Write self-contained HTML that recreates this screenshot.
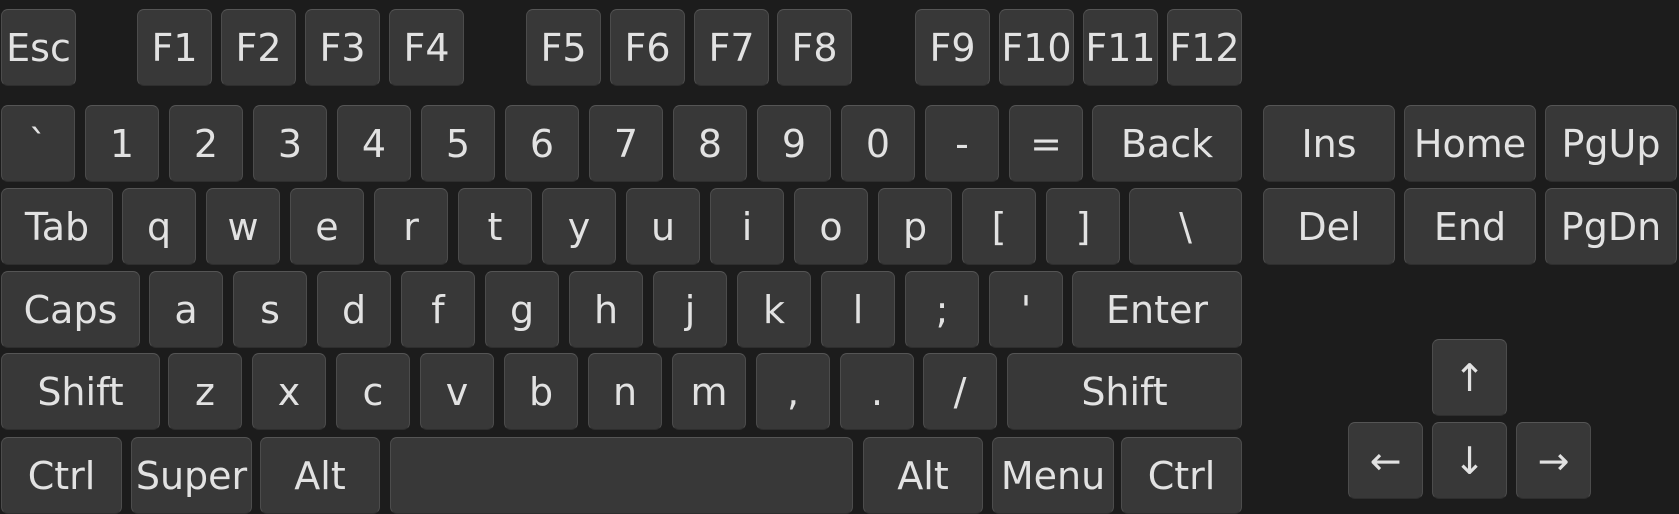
<!DOCTYPE html>
<html><head><meta charset="utf-8"><style>
html,body{margin:0;padding:0;background:#1c1c1c;width:1679px;height:512px;overflow:hidden}
.k{position:absolute;height:75px;background:#383838;border:1px solid #4c4c4c;border-top-color:#555;border-bottom-color:#2e2e2e;border-radius:7px;color:#e2e2e2;font-family:"DejaVu Sans","Liberation Sans",sans-serif;font-size:38px;display:flex;align-items:center;justify-content:center;white-space:nowrap;box-sizing:content-box}
</style></head><body>
<div class="k" style="left:1px;top:9px;width:73px">Esc</div>
<div class="k" style="left:137px;top:9px;width:73px">F1</div>
<div class="k" style="left:221px;top:9px;width:73px">F2</div>
<div class="k" style="left:305px;top:9px;width:73px">F3</div>
<div class="k" style="left:389px;top:9px;width:73px">F4</div>
<div class="k" style="left:526px;top:9px;width:73px">F5</div>
<div class="k" style="left:610px;top:9px;width:73px">F6</div>
<div class="k" style="left:694px;top:9px;width:73px">F7</div>
<div class="k" style="left:777px;top:9px;width:73px">F8</div>
<div class="k" style="left:915px;top:9px;width:73px">F9</div>
<div class="k" style="left:999px;top:9px;width:73px">F10</div>
<div class="k" style="left:1083px;top:9px;width:73px">F11</div>
<div class="k" style="left:1167px;top:9px;width:73px">F12</div>

<div class="k" style="left:1px;top:105px;width:72px">`</div>
<div class="k" style="left:85px;top:105px;width:72px">1</div>
<div class="k" style="left:169px;top:105px;width:72px">2</div>
<div class="k" style="left:253px;top:105px;width:72px">3</div>
<div class="k" style="left:337px;top:105px;width:72px">4</div>
<div class="k" style="left:421px;top:105px;width:72px">5</div>
<div class="k" style="left:505px;top:105px;width:72px">6</div>
<div class="k" style="left:589px;top:105px;width:72px">7</div>
<div class="k" style="left:673px;top:105px;width:72px">8</div>
<div class="k" style="left:757px;top:105px;width:72px">9</div>
<div class="k" style="left:841px;top:105px;width:72px">0</div>
<div class="k" style="left:925px;top:105px;width:72px">-</div>
<div class="k" style="left:1009px;top:105px;width:72px">=</div>
<div class="k" style="left:1092px;top:105px;width:148px">Back</div>
<div class="k" style="left:1263px;top:105px;width:130px">Ins</div>
<div class="k" style="left:1404px;top:105px;width:130px">Home</div>
<div class="k" style="left:1545px;top:105px;width:130px">PgUp</div>

<div class="k" style="left:1px;top:188px;width:110px">Tab</div>
<div class="k" style="left:122px;top:188px;width:72px">q</div>
<div class="k" style="left:206px;top:188px;width:72px">w</div>
<div class="k" style="left:290px;top:188px;width:72px">e</div>
<div class="k" style="left:374px;top:188px;width:72px">r</div>
<div class="k" style="left:458px;top:188px;width:72px">t</div>
<div class="k" style="left:542px;top:188px;width:72px">y</div>
<div class="k" style="left:626px;top:188px;width:72px">u</div>
<div class="k" style="left:710px;top:188px;width:72px">i</div>
<div class="k" style="left:794px;top:188px;width:72px">o</div>
<div class="k" style="left:878px;top:188px;width:72px">p</div>
<div class="k" style="left:962px;top:188px;width:72px">[</div>
<div class="k" style="left:1046px;top:188px;width:72px">]</div>
<div class="k" style="left:1129px;top:188px;width:111px">\</div>
<div class="k" style="left:1263px;top:188px;width:130px">Del</div>
<div class="k" style="left:1404px;top:188px;width:130px">End</div>
<div class="k" style="left:1545px;top:188px;width:130px">PgDn</div>

<div class="k" style="left:1px;top:271px;width:137px">Caps</div>
<div class="k" style="left:149px;top:271px;width:72px">a</div>
<div class="k" style="left:233px;top:271px;width:72px">s</div>
<div class="k" style="left:317px;top:271px;width:72px">d</div>
<div class="k" style="left:401px;top:271px;width:72px">f</div>
<div class="k" style="left:485px;top:271px;width:72px">g</div>
<div class="k" style="left:569px;top:271px;width:72px">h</div>
<div class="k" style="left:653px;top:271px;width:72px">j</div>
<div class="k" style="left:737px;top:271px;width:72px">k</div>
<div class="k" style="left:821px;top:271px;width:72px">l</div>
<div class="k" style="left:905px;top:271px;width:72px">;</div>
<div class="k" style="left:989px;top:271px;width:72px">'</div>
<div class="k" style="left:1072px;top:271px;width:168px">Enter</div>

<div class="k" style="left:1px;top:353px;width:157px">Shift</div>
<div class="k" style="left:168px;top:353px;width:72px">z</div>
<div class="k" style="left:252px;top:353px;width:72px">x</div>
<div class="k" style="left:336px;top:353px;width:72px">c</div>
<div class="k" style="left:420px;top:353px;width:72px">v</div>
<div class="k" style="left:504px;top:353px;width:72px">b</div>
<div class="k" style="left:588px;top:353px;width:72px">n</div>
<div class="k" style="left:672px;top:353px;width:72px">m</div>
<div class="k" style="left:756px;top:353px;width:72px">,</div>
<div class="k" style="left:840px;top:353px;width:72px">.</div>
<div class="k" style="left:923px;top:353px;width:72px">/</div>
<div class="k" style="left:1007px;top:353px;width:233px">Shift</div>
<div class="k" style="left:1432px;top:339px;width:73px">↑</div>

<div class="k" style="left:1px;top:437px;width:119px">Ctrl</div>
<div class="k" style="left:131px;top:437px;width:119px">Super</div>
<div class="k" style="left:260px;top:437px;width:118px">Alt</div>
<div class="k" style="left:390px;top:437px;width:461px"></div>
<div class="k" style="left:863px;top:437px;width:118px">Alt</div>
<div class="k" style="left:992px;top:437px;width:120px">Menu</div>
<div class="k" style="left:1121px;top:437px;width:119px">Ctrl</div>
<div class="k" style="left:1348px;top:422px;width:73px">←</div>
<div class="k" style="left:1432px;top:422px;width:73px">↓</div>
<div class="k" style="left:1516px;top:422px;width:73px">→</div>
</body></html>
